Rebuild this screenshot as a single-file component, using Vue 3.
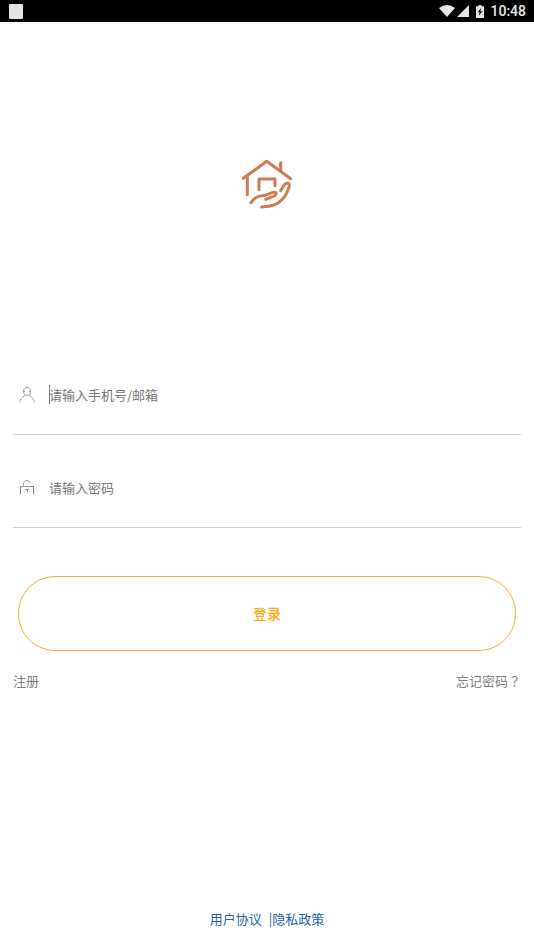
<script setup>
import { ref } from 'vue'

const account = ref('')
const password = ref('')
</script>

<template>
  <div class="screen">
    <header class="status">
      <span class="notice"></span>
      <div class="indicators">
        <svg class="wifi" viewBox="0 0 16 12" aria-hidden="true">
          <path d="M0 3Q8-3 16 3L8 12Z" />
        </svg>
        <svg class="signal" viewBox="0 0 12 12" aria-hidden="true">
          <path d="M12 0V12H0Z" />
        </svg>
        <svg class="battery" viewBox="0 0 8 13" aria-hidden="true">
          <path d="M2.5 0H5.500V1.300H7.300Q8 1.300 8 2V12.300Q8 13 7.300 13H.7Q0 13 0 12.300V2Q0 1.300 .7 1.300H2.500Z" />
          <path class="bolt" d="M5 3L1.600 7.200H3.600L2.800 10.800L6.500 6.300H4.500Z" />
        </svg>
        <time>10:48</time>
      </div>
    </header>

    <main>
      <div class="brand">
        <svg class="logo" viewBox="0 0 210 204" aria-hidden="true">
          <path d="M34 85L104 34L176 86M146 38V62M46 80V134M81 119V87H129V107" />
          <path d="M57 158C68 141 78 137 91 137C106 136 117 126 128 127C137 129 132 136 122 140L101 148" />
          <path d="M89 171C108 169 126 168 138 159C157 146 168 124 172 108C173 97 161 98 156 106L146 122" />
        </svg>
      </div>

      <form @submit.prevent>
        <div class="field">
          <label for="account" aria-label="手机号/邮箱">
            <svg class="icon" viewBox="0 0 16 16" aria-hidden="true">
              <path d="M8 .5C5.800 .5 4.500 2.200 4.500 4.200C4.500 6.800 6 8.500 8 8.500S11.500 6.800 11.500 4.200C11.500 2.200 10.200 .5 8 .5ZM4.500 4.500H6M10 4.500H11.500M.5 15.500C1.200 12 2.800 10.200 6 8.500M15.500 15.500C14.800 12 13.200 10.200 10 8.500" />
            </svg>
          </label>
          <div class="entry">
            <span class="caret"></span>
            <input id="account" v-model="account" type="text" placeholder="请输入手机号/邮箱" />
          </div>
        </div>
        <div class="field">
          <label for="password" aria-label="密码">
            <svg class="icon" viewBox="0 0 16 16" aria-hidden="true">
              <path d="M4.500 6.500V4C4.500-.5 10.500-.5 11.500 3.500M4.500 6.500H12" />
              <path class="dark" d="M4 6.500H1.500V14.500M12 6.500H14.500V14.500M6.500 9.500H9.500M8.500 9.500V12" />
            </svg>
          </label>
          <div class="entry">
            <input id="password" v-model="password" type="password" placeholder="请输入密码" />
          </div>
        </div>
        <button class="login" type="submit">登录</button>
      </form>

      <nav class="links">
        <a href="#register">注册</a>
        <a href="#forgot">忘记密码<span class="mark">？</span></a>
      </nav>
    </main>

    <footer>
      <a href="#terms">用户协议</a>
      <span class="divider">|</span>
      <a href="#privacy">隐私政策</a>
    </footer>
  </div>
</template>

<style>
body {
  margin: 0;
  background: #fff;
}
</style>

<style scoped>
.screen {
  display: flex;
  flex-direction: column;
  min-height: 100vh;
  font-family: "Noto Sans CJK SC", sans-serif;
  font-size: 13px;
  line-height: 20px;
  color: #808080;
}

a {
  color: inherit;
  text-decoration: none;
}

.status {
  display: flex;
  align-items: center;
  justify-content: space-between;
  height: 22px;
  padding: 0 8px 0 9px;
  background: #000;
  color: #e6e6e6;
}

.notice {
  width: 14px;
  height: 15px;
  border-radius: 1px;
  background: #e4e4e4;
}

.indicators {
  display: flex;
  align-items: center;
  fill: #e6e6e6;
}

.wifi {
  width: 16px;
  height: 12px;
  margin-right: 2px;
}

.signal {
  width: 12px;
  height: 12px;
  margin-right: 7px;
}

.battery {
  width: 8px;
  height: 13px;
  margin-right: 6px;
}

.bolt {
  fill: #000;
}

time {
  font-family: Roboto, sans-serif;
  font-size: 14px;
  font-weight: 500;
}

main {
  flex: 1;
}

.brand {
  display: flex;
  justify-content: center;
  padding: 128px 0 138px;
}

.logo {
  width: 70px;
  height: 68px;
  fill: none;
  stroke: #cf7d50;
  stroke-width: 9;
  stroke-linecap: round;
  stroke-linejoin: round;
}

form {
  padding: 0 13px;
}

.field {
  display: flex;
  align-items: center;
  height: 78px;
  margin-bottom: 14px;
  padding-left: 6px;
  border-bottom: 1px solid #d2d2d2;
}

.field label {
  display: flex;
  margin-right: 14px;
}

.icon {
  width: 16px;
  height: 16px;
  fill: none;
  stroke: #a0a0a0;
  stroke-width: 1;
}

.icon .dark {
  stroke: #808080;
}

.entry {
  position: relative;
  flex: 1;
}

.caret {
  position: absolute;
  top: 0;
  left: 0;
  width: 1px;
  height: 19px;
  background: #777;
}

input {
  display: block;
  box-sizing: border-box;
  width: 100%;
  height: 20px;
  padding: 0;
  border: 0;
  outline: 0;
  background: transparent;
  font: inherit;
  color: #333;
}

input::placeholder {
  color: #777;
  opacity: 1;
}

.login {
  display: block;
  width: calc(100% - 10px);
  height: 75px;
  margin: 48px auto 0;
  padding: 0 0 2px;
  border: 1px solid #fbb02d;
  border-radius: 37px;
  background: transparent;
  font: inherit;
  font-size: 14px;
  font-weight: 500;
  color: #ffa810;
}

.links {
  display: flex;
  justify-content: space-between;
  padding: 20px 13px;
}

.mark {
  font-family: "Noto Sans CJK TC", sans-serif;
}

footer {
  display: flex;
  justify-content: center;
  padding-bottom: 21px;
  color: #1f5fae;
}

.divider {
  margin-left: 7px;
}
</style>
